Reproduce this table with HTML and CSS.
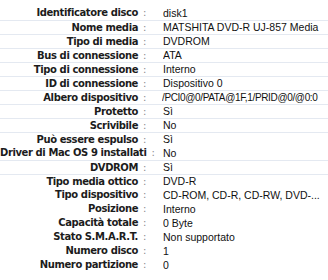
FILE: index.html
```html
<!DOCTYPE html>
<html lang="it">
<head>
  <meta charset="UTF-8" />
  <title>Informazioni disco</title>
  <link rel="stylesheet" href="styles.css">
</head>
<body>

  <!-- Disk info list -->
  <div class="info">
    <div class="row"><span class="label">Identificatore disco<b>:</b></span><span class="value">disk1</span></div>
    <div class="row line"><span class="label">Nome media<b>:</b></span><span class="value">MATSHITA DVD-R UJ-857 Media</span></div>
    <div class="row line"><span class="label">Tipo di media<b>:</b></span><span class="value">DVDROM</span></div>
    <div class="row line"><span class="label">Bus di connessione<b>:</b></span><span class="value">ATA</span></div>
    <div class="row line"><span class="label">Tipo di connessione<b>:</b></span><span class="value">Interno</span></div>
    <div class="row line"><span class="label">ID di connessione<b>:</b></span><span class="value">Dispositivo 0</span></div>
    <div class="row line"><span class="label">Albero dispositivo<b>:</b></span><span class="value path">/PCI0@0/PATA@1F,1/PRID@0/@0:0</span></div>
    <div class="row line"><span class="label">Protetto<b>:</b></span><span class="value">Sì</span></div>
    <div class="row line"><span class="label">Scrivibile<b>:</b></span><span class="value">No</span></div>
    <div class="row line"><span class="label">Può essere espulso<b>:</b></span><span class="value">Sì</span></div>
    <div class="row"><span class="label">Driver di Mac OS 9 installati<b>:</b></span><span class="value">No</span></div>
    <div class="row line"><span class="label">DVDROM<b>:</b></span><span class="value">Sì</span></div>
    <div class="row line"><span class="label">Tipo media ottico<b>:</b></span><span class="value">DVD-R</span></div>
    <div class="row"><span class="label">Tipo dispositivo<b>:</b></span><span class="value">CD-ROM, CD-R, CD-RW, DVD-...</span></div>
    <div class="row"><span class="label">Posizione<b>:</b></span><span class="value">Interno</span></div>
    <div class="row"><span class="label">Capacità totale<b>:</b></span><span class="value">0 Byte</span></div>
    <div class="row"><span class="label">Stato S.M.A.R.T.<b>:</b></span><span class="value">Non supportato</span></div>
    <div class="row"><span class="label">Numero disco<b>:</b></span><span class="value">1</span></div>
    <div class="row"><span class="label">Numero partizione<b>:</b></span><span class="value">0</span></div>
  </div>

</body>
</html>
```

FILE: styles.css
```css
body {
  margin: 0;
  background: #fff;
  color: #111;
  font-family: "Liberation Sans", Arial, sans-serif;
  font-size: 10.5px;
}

.info {
  padding-top: 6px;
}

.row {
  display: grid;
  grid-template-columns: 146px 1fr;
  column-gap: 17px;
  height: 14px;
  line-height: 14px;
  white-space: nowrap;
}

.row.line {
  border-top: 1px solid #e4e9f1;
  height: 13px;
  line-height: 13px;
}

.label {
  text-align: right;
  font-family: "DejaVu Sans", sans-serif;
  font-weight: bold;
  font-size: 10px;
  color: #1c1c1c;
  letter-spacing: -0.4px;
}

.label b {
  color: #8a8a8a;
  font-weight: normal;
  margin-left: 5px;
}

.value {
  overflow: hidden;
}

.value.path {
  font-size: 10px;
  letter-spacing: -0.35px;
  margin-left: -1px;
}
```
